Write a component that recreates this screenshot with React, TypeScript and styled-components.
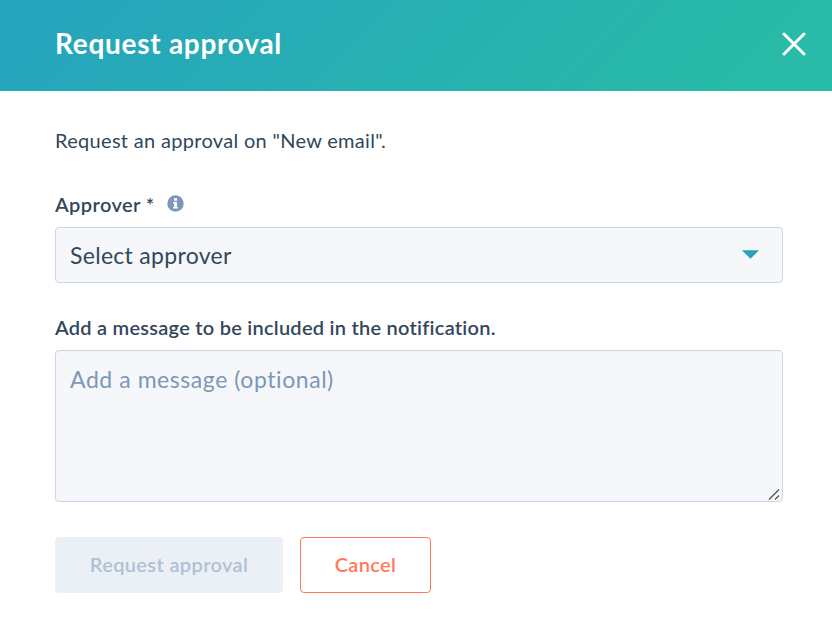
import React from "react";
import styled, { createGlobalStyle } from "styled-components";

const GlobalStyle = createGlobalStyle`
  *, *::before, *::after { box-sizing: border-box; }
  body { margin: 0; background: #fff; font-family: Lato, "Open Sans", sans-serif; color: #33475b; overflow: hidden; }
  button { font-family: inherit; }
`;

const Dialog = styled.div`
  width: 832px;
  height: 623px;
  background: #fff;
`;

const Header = styled.header`
  display: flex;
  align-items: center;
  justify-content: space-between;
  height: 91px;
  padding: 0 26px 3px 55px;
  background: linear-gradient(135deg, #26a3bf, #28bba7 90%);
`;

const Text = styled.span<{ $spacing: number }>`
  display: block;
  white-space: pre;
  letter-spacing: ${(p) => p.$spacing}px;
`;

const Title = styled.h2`
  margin: 0;
  padding-bottom: 2px;
  color: #fff;
  font-size: 28px;
  font-weight: 700;
  line-height: 36px;
`;

const CloseButton = styled.button`
  display: flex;
  padding: 0;
  border: 0;
  background: none;
`;

const Body = styled.main`
  padding: 35px 49px 0 55px;
`;

const Intro = styled.p`
  margin: 0;
  font-size: 20px;
  line-height: 28px;
`;

const FieldLabel = styled.div<{ $top: number }>`
  display: flex;
  align-items: center;
  gap: 12px;
  height: 28px;
  margin-top: ${(p) => p.$top}px;
  font-size: 20px;
  font-weight: 600;
  line-height: 28px;
`;

const InfoIcon = styled.svg`
  margin-bottom: 2px;
`;

const Select = styled.button`
  display: flex;
  align-items: center;
  justify-content: space-between;
  width: 728px;
  height: 56px;
  margin-top: 9px;
  padding: 0 23px 1px 14px;
  border: 1.5px solid #cbd6e2;
  border-radius: 4px;
  background: #f5f7fa;
  color: #33475b;
  font-size: 23px;
`;

const MessageBox = styled.div`
  display: flex;
  justify-content: space-between;
  width: 728px;
  height: 152px;
  margin-top: 9px;
  padding: 13px 1px 0 14px;
  border: 1.5px solid #cbd6e2;
  border-radius: 4px;
  background: #f5f7fa;
  color: #7c98b6;
  font-size: 23px;
  line-height: 30px;
`;

const ResizeGrip = styled.svg`
  align-self: flex-end;
`;

const Actions = styled.footer`
  display: flex;
  gap: 17px;
  margin-top: 35px;
`;

const Button = styled.button<{ $primary?: boolean }>`
  display: flex;
  align-items: center;
  justify-content: center;
  width: ${(p) => (p.$primary ? 228 : 131)}px;
  height: 56px;
  padding: 0 0 2px;
  border: 1.5px solid ${(p) => (p.$primary ? "#eaf0f6" : "#ff7a59")};
  border-radius: 4px;
  background: ${(p) => (p.$primary ? "#eaf0f6" : "#fff")};
  color: ${(p) => (p.$primary ? "#b0c1d4" : "#ff7a59")};
  font-size: 20px;
  font-weight: 600;
`;

export default function App() {
  return (
    <Dialog role="dialog" aria-label="Request approval">
      <GlobalStyle />
      <Header>
        <Title><Text $spacing={0.72}>Request approval</Text></Title>
        <CloseButton aria-label="Close">
          <svg width="24" height="24" viewBox="0 0 24 24" fill="none" stroke="#fff" strokeWidth="3" strokeLinecap="round">
            <path d="M2 2 22 22M22 2 2 22" />
          </svg>
        </CloseButton>
      </Header>
      <Body>
        <Intro><Text $spacing={0.31}>Request an approval on "New email".</Text></Intro>
        <FieldLabel $top={36}>
          <Text $spacing={0.4}>Approver *</Text>
          <InfoIcon width="17" height="17" viewBox="0 0 17 17">
            <circle cx="8.5" cy="8.5" r="8.2" fill="#7c98b6" />
            <path d="M7 3.3h3v2.4H7zM6.2 7h3.7v5.1h1v1.4H6.2v-1.4h1V8.4h-1z" fill="#fff" />
          </InfoIcon>
        </FieldLabel>
        <Select>
          <Text $spacing={0.3}>Select approver</Text>
          <svg width="17" height="9" viewBox="0 0 17 9"><path d="M0 .3h17L8.5 8.8z" fill="#26a3bb" /></svg>
        </Select>
        <FieldLabel $top={30}><Text $spacing={0.25}>Add a message to be included in the notification.</Text></FieldLabel>
        <MessageBox>
          <Text $spacing={0.56}>Add a message (optional)</Text>
          <ResizeGrip width="13" height="13" viewBox="0 0 13 13" fill="none" stroke="#555" strokeWidth="1.3">
            <path d="M1 11.5 11 1.5M7 11.5 11 7.5" />
          </ResizeGrip>
        </MessageBox>
        <Actions>
          <Button $primary disabled><Text $spacing={0.36}>Request approval</Text></Button>
          <Button><Text $spacing={0.36}>Cancel</Text></Button>
        </Actions>
      </Body>
    </Dialog>
  );
}
